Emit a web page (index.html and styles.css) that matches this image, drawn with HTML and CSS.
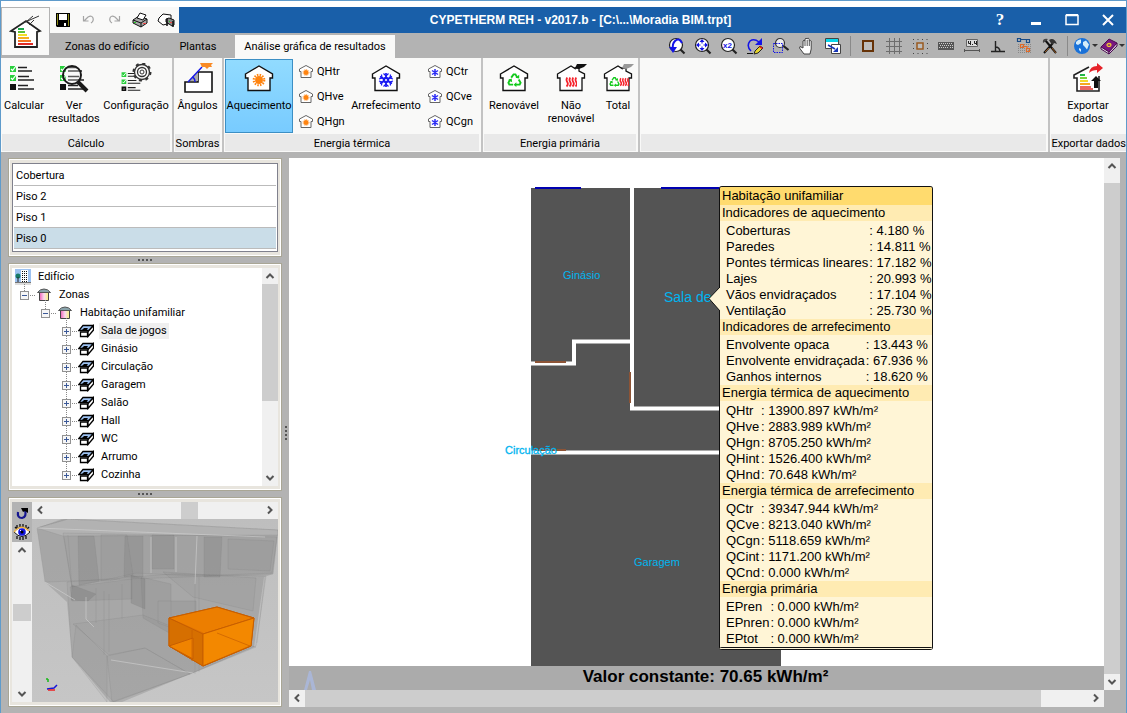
FILE: index.html
```html
<!DOCTYPE html>
<html lang="pt">
<head>
<meta charset="utf-8">
<title>CYPETHERM REH</title>
<link rel="stylesheet" href="styles.css">
</head>
<body>
<svg class="defs" aria-hidden="true">
  <symbol id="house" viewBox="0 0 32 32"><path d="M2.500 11 16 3l4 2.500V5h4v3l5.500 3v4H27v12.500H5V15H2.500z" fill="#fff" stroke="#111" stroke-width="1.300"/></symbol>
  <symbol id="house-plain" viewBox="0 0 32 32"><path d="M2.500 11 16 3l13.500 8v4H27v12.500H5V15H2.500z" fill="#fff" stroke="#111" stroke-width="1.400"/></symbol>
  <symbol id="sun" viewBox="-8 -8 16 16"><circle r="4.500" fill="#ff8410"/><circle r="6" fill="none" stroke="#ff8410" stroke-width="2.500" stroke-dasharray="1.700 1.440"/></symbol>
  <symbol id="snow" viewBox="-8 -8 16 16"><g stroke="#1717f2" stroke-width="1.700" fill="none"><path d="M0-7V7M-6-3.500 6 3.500M-6 3.500 6-3.500"/><path d="M-2.500-6.500 0-4l2.500-2.500M-2.500 6.500 0 4l2.500 2.500M-7-1l3-1-.5-3.500M7 1 4 2l.5 3.500M-7 1l3 1-.5 3.500M7-1 4-2l.5-3.500" stroke-width="1.200"/><circle r="2.500"/></g><circle r="1" fill="#fff"/></symbol>
  <symbol id="house-sun" viewBox="0 0 16 16"><path d="M1.500 5 8 1.500 14.500 5v2.500H13v6H3v-6H1.500z" fill="#fff" stroke="#666"/><circle cx="8" cy="8.500" r="2.500" fill="#ff8410"/><circle cx="8" cy="8.500" r="3" fill="none" stroke="#ff9c40" stroke-dasharray="1 1"/></symbol>
  <symbol id="house-snow" viewBox="0 0 16 16"><path d="M1.500 5 8 1.500 14.500 5v2.500H13v6H3v-6H1.500z" fill="#fff" stroke="#666"/><path d="M8 5v7M5 6.500l6 4M5 10.500l6-4" stroke="#2b2bf5" stroke-width="1.500"/></symbol>
  <symbol id="checks" viewBox="0 0 32 32"><path d="M2 3h6v6H2zM2 12h6v6H2z" fill="#28cf3c"/><path d="m3 6 1.500 1.500L8 3M3 15l1.500 1.500L8 12" stroke="#fff" stroke-width="1.200" fill="none"/><path d="M3 22h4v4H3z" fill="#fff" stroke="#111" stroke-width="2"/><path d="m4 23 2 2m0-2-2 2" stroke="#111"/><path d="M10 4.500h9M10 8h14M10 13.500h11M10 17h16M10 22.500h10M10 26h16" stroke="#222" stroke-width="1.400"/></symbol>
  <symbol id="recycle" viewBox="0 0 16 16"><g fill="none" stroke="#12c91c" stroke-width="2"><path d="M4.500 6 7 2.500h2L11 6M12.500 8l2 3.500-1 2H9M6.500 13.500H2.500l-1-2L3.500 8"/></g><path d="m9 6 4 1V3zM10 11v5l-3-2.500zM1 8.500 5 7l.5 4z" fill="#12c91c"/></symbol>
  <symbol id="flames" viewBox="0 0 16 16"><path d="M3 2q-2 3 0 6t-1 6M7 2q-2 3 0 6t-1 6M11 2q-2 3 0 6t-1 6M15 2q-2 3 0 6t-1 6" fill="none" stroke="#f6232c" stroke-width="2.400"/></symbol>
  <symbol id="room" viewBox="0 0 16 14"><path d="M5 1.500h10.500L11 6.500H.8z" fill="#9fc4f5" stroke="#000" stroke-width="1.300"/><path d="M6 4h4L8 7H3z" fill="#000"/><path d="M2.500 8h7v4.500h-7z" fill="#fff" stroke="#000" stroke-width="1.300"/><path d="M11 6.500 15.500 1.500V6L10 12.500V8z" fill="#fff" stroke="#000" stroke-width="1.300"/></symbol>
  <symbol id="zone" viewBox="0 0 16 14"><linearGradient id="zone-fill"><stop stop-color="#ef62b5"/><stop offset=".5" stop-color="#fbd9f0"/><stop offset="1" stop-color="#f6f37a"/></linearGradient><path d="M3.500 4h9v8.500h-9z" fill="url(#zone-fill)" stroke="#444"/><path d="M1.500 4.500Q4 1 8 1t6.500 3.500z" fill="#8aa4ac" stroke="#555"/></symbol>
  <symbol id="lens" viewBox="0 0 18 18"><circle cx="8" cy="8" r="6.500" fill="#fff" stroke="#222" stroke-width="1.200"/><path d="m12.500 12.500 4 4" stroke="#222" stroke-width="2.200"/></symbol>
  <symbol id="up" viewBox="0 0 10 10"><path d="M1.500 7 5 3.500 8.500 7" fill="none" stroke="#555" stroke-width="2"/></symbol>
  <symbol id="down" viewBox="0 0 10 10"><path d="M1.500 3 5 6.500 8.500 3" fill="none" stroke="#555" stroke-width="2"/></symbol>
  <symbol id="left" viewBox="0 0 10 10"><path d="M7 1.500 3.500 5 7 8.500" fill="none" stroke="#555" stroke-width="2"/></symbol>
  <symbol id="right" viewBox="0 0 10 10"><path d="M3 1.500 6.500 5 3 8.500" fill="none" stroke="#555" stroke-width="2"/></symbol>
</svg>
<div class="window">
  <header class="top">
    <button class="app-button" aria-label="Menu"><svg width="36" height="36" viewBox="0 0 36 36"><path d="M3 17 18 7l14 10-3 1v15H7V18z" fill="#fff" stroke="#222" stroke-width="1.800"/><path d="m15 9 16-7M18 8l7-6M26 6l-5 5" stroke="#333" fill="none"/><path d="M10 14h6v2h-6z" fill="#19a54b"/><path d="M10 17h7v2h-7z" fill="#5bc236"/><path d="M10 20h9v2h-9z" fill="#f2df27"/><path d="M10 23h11v2H10z" fill="#f6b21f"/><path d="M10 26h13v2H10z" fill="#f27321"/><path d="M10 29h15v2H10z" fill="#e02b26"/></svg></button>
    <div class="top-main">
      <div class="title-row">
        <div class="quick">
          <button aria-label="Guardar"><svg width="16" height="16"><path d="M1 1h14v14H2l-1-1z" fill="#000"/><path d="M4 2h8v6H4z" fill="#fff"/><path d="M2 2h1v11H2zM13 2h1v12h-1z" fill="#8a8a18"/><path d="M9 11h2v3H9z" fill="#fff"/></svg></button>
          <button aria-label="Desfazer"><svg width="16" height="16"><path d="M2.500 4v5h5M3 9l4-4q4-2 5 1t-2 5" fill="none" stroke="#a5a5a5" stroke-width="1.200"/></svg></button>
          <button aria-label="Refazer"><svg width="16" height="16"><path d="M13.500 4v5h-5M13 9 9 5Q5 3 4 6t2 5" fill="none" stroke="#a5a5a5" stroke-width="1.200"/></svg></button>
          <button aria-label="Imprimir"><svg width="18" height="16"><path d="m2 8 6-4 8 3v4l-6 4-8-4z" fill="#a9a9a9" stroke="#111"/><path d="m6 6 3-5 6 2-3 5z" fill="#fff" stroke="#111"/><path d="m2 8 8 3 6-4M10 11v4" stroke="#111" fill="none"/><path d="M3 10h2v1H3z" fill="#2c2"/><path d="M12 11h3v1h-3z" fill="#e44"/></svg></button>
          <button aria-label="Exportar imagem"><svg width="18" height="16"><path d="M2 6 6 2l8 1v8L6 13 1 9z" fill="#fff" stroke="#111"/><path d="m9 7 3-1 5 2v5l-2 1-6-4z" fill="#888" stroke="#111"/><path d="M10 7v7M16 9v6" stroke="#111" stroke-width="1.500"/><path d="M12 9h1v1h-1z" fill="#2c2"/><path d="M13 10h2v1h-2z" fill="#e44"/></svg></button>
        </div>
        <div class="title-bar">
          <h1>CYPETHERM REH - v2017.b - [C:\...\Moradia BIM.trpt]</h1>
          <button class="win-btn help" aria-label="Ajuda">?</button>
          <button class="win-btn" aria-label="Minimizar"><svg width="14" height="14"><path d="M2 10.500h10" stroke="#fff" stroke-width="3"/></svg></button>
          <button class="win-btn" aria-label="Maximizar"><svg width="14" height="14"><path d="M1 2.500h12v9H1z" fill="none" stroke="#fff" stroke-width="1.500"/><path d="M1 2h12" stroke="#fff" stroke-width="2"/></svg></button>
          <button class="win-btn" aria-label="Fechar"><svg width="14" height="14"><path d="m2 2 10 10M12 2 2 12" stroke="#fff" stroke-width="2"/></svg></button>
        </div>
      </div>
      <div class="tab-row">
        <nav class="tabs">
          <button class="tab">Zonas do edifício</button>
          <button class="tab">Plantas</button>
          <button class="tab active">Análise gráfica de resultados</button>
        </nav>
        <div class="tools">
          <button aria-label="Vista anterior"><svg width="18" height="18"><use href="#lens"/><path d="M14 6Q11 0 7 4 4 7 5 12" fill="none" stroke="#1414e6" stroke-width="2"/><path d="M1 10h8l-4 6z" fill="#1414e6"/></svg></button>
          <button aria-label="Enquadrar"><svg width="18" height="18"><use href="#lens"/><path d="M8 4v8M4 8h8" stroke="#1414e6" stroke-dasharray="2.500 3"/><path d="m8 2 2.500 3h-5zM8 14l2.500-3h-5zM2 8l3-2.500v5zM14 8l-3-2.500v5z" fill="#1414e6"/></svg></button>
          <button aria-label="Zoom duplo"><svg width="18" height="18"><use href="#lens"/><text x="3" y="11" class="lens-text">x2</text></svg></button>
          <button aria-label="Redesenhar"><svg width="18" height="18"><path d="M5 14Q0 9 4 4q4-3 9 1" fill="none" stroke="#1414e6" stroke-width="1.500"/><path d="M16 1v7H9z" fill="#1414e6"/><path d="m9 14 5-5 3 2-5 5-4 1z" fill="#e7d52c" stroke="#222"/><path d="m14 9 3 2-1 1-3-2z" fill="#e11"/><path d="M1 16.500h6" stroke="#111"/></svg></button>
          <button aria-label="Zoom janela"><svg width="18" height="18"><circle cx="8" cy="6" r="4.500" fill="#eee" stroke="#333" stroke-width="1.200"/><path d="m11.500 9 5 4" stroke="#222" stroke-width="2.200"/><path d="M1.500 6.500h9v9h-9z" fill="none" stroke="#1414e6" stroke-dasharray="1.500 1"/></svg></button>
          <button aria-label="Mover"><svg width="18" height="18"><path d="M6 17 1.500 11 2 9.500 5 11V4q1-1.500 2 0V2q1-1.500 2.200 0V1.500q1.300-1 2 .8V4q1.300-1 2 0v8L12 17z" fill="#fff" stroke="#444"/><path d="M7 4v5M9.200 3v6M11.300 4v5" stroke="#555"/></svg></button>
          <button aria-label="Copiar vista"><svg width="18" height="18"><path d="M1.500 1.500h13v10h-13z" fill="#fff" stroke="#444"/><path d="M2 2h12v3H2z" fill="#08d6ea"/><path d="M7.500 7.500h9v9h-9z" fill="#fff" stroke="#444"/><path d="m4 8 7 4" stroke="#1535b8" stroke-width="1.500"/><path d="M14 10v5H9z" fill="#1535b8"/></svg></button>
          <span class="tool-sep"></span>
          <button aria-label="Contorno"><svg width="18" height="18"><path d="M4 4h10v10H4z" fill="#bdbdbd" stroke="#663207" stroke-width="2"/></svg></button>
          <button aria-label="Grelha"><svg width="18" height="18"><path d="M4.500 1v16M9.500 1v16M14.500 1v16M1 4.500h16M1 9.500h16M1 14.500h16" stroke="#6d6d6d"/></svg></button>
          <button aria-label="Malha"><svg width="18" height="18"><path d="M2 2.500h15M2 16.500h15M2 6.500h1M2 11.500h1M16 6.500h1M16 11.500h1" stroke="#444" stroke-dasharray="1 3.500"/><path d="M6 6h6v6H6z" fill="#bdbdbd" stroke="#9b5b20" stroke-width="1.500"/></svg></button>
          <button aria-label="Teclado"><svg width="18" height="18"><path d="M1 5h16v8H1z" fill="#555"/><path d="M2 6.500h14M3 8.500h13M2 10.500h3m1 0h6m1 0h3" stroke="#ccc" stroke-dasharray="1 1"/></svg></button>
          <button aria-label="Cotas"><svg width="18" height="18"><path d="M3.500 2.500h11v7h-11z" fill="#ddd" stroke="#666"/><path d="M5.500 4v2.500h2M7.500 4v4M9 7.500h1M11.500 4v2.500h2M13.500 4v4" stroke="#222" fill="none"/><path d="M1 13.500h16M1.500 12v3M16.500 12v3" stroke="#555"/></svg></button>
          <button aria-label="Ortogonal"><svg width="18" height="18"><path d="M2 14.500h14M6.500 4v11M6 10q5 0 5 5" stroke="#222" stroke-width="1.400" fill="none"/></svg></button>
          <button aria-label="Camadas"><svg width="18" height="18"><path d="M3 7.500h13M3 9.500h13M3 11.500h13M3 13.500h13M3 15.500h13" stroke="#888" stroke-dasharray="1 1"/><path d="M2.500 1.500h3v3h-3zM11.500 2.500h3v3h-3zM6 2.500h5" stroke="#174b87" stroke-width="1.200" fill="none"/><path d="M5.500 7.500h3v3h-3zM11.500 11.500h3v3h-3zM9 9.500h3v2" stroke="#e06a28" stroke-width="1.200" fill="none"/></svg></button>
          <button aria-label="Ferramentas"><svg width="18" height="18"><path d="m3 16 9-10M4 3l11 13" stroke="#111" stroke-width="2"/><path d="M8 3q5-3 8 4l-3-1-2 2z" fill="#333"/><path d="M2 6q-1-5 5-4L5 4z" fill="#444"/><path d="m11 11 4 5M4 15l4-4" stroke="#96571f"/></svg></button>
          <span class="tool-sep"></span>
          <button class="drop" aria-label="Internet"><svg width="18" height="18"><circle cx="9" cy="9" r="8" fill="#1971d8"/><path d="M3 5q2-3 5-2.500L8 6 5 8 3 7zM10 5l3-1.500 3 4-2 5-2-2.500-2-2zM6 11l2 1v3l-2-2z" fill="#d4ecfa"/></svg><i></i></button>
          <button class="drop" aria-label="Manual"><svg width="18" height="18"><path d="m1 10 8-8 8 4-8 9z" fill="#7a1680" stroke="#4a0a50"/><path d="m1 10 8 5v2l-8-5z" fill="#eee" stroke="#4a0a50"/><path d="m9 15 8-9v3l-8 8z" fill="#d5bdd8" stroke="#4a0a50"/><ellipse cx="9" cy="8" rx="2" ry="1.500" fill="none" stroke="#efc832" stroke-width="1.300"/></svg><i></i></button>
        </div>
      </div>
    </div>
  </header>

  <div class="ribbon">
    <section class="group">
      <div class="group-body calc">
        <button class="big"><svg width="32" height="32"><use href="#checks"/></svg>Calcular</button>
        <button class="big"><svg width="32" height="32"><use href="#checks"/><circle cx="14" cy="12" r="9" fill="#fff" fill-opacity=".25" stroke="#1a1a1a" stroke-width="2"/><path d="m20 19 9 9" stroke="#1a1a1a" stroke-width="4"/></svg>Ver<br>resultados</button>
        <button class="big"><svg width="36" height="32"><use href="#checks" x="2" y="7" width="25" height="25"/><circle cx="24" cy="9" r="7.500" fill="#f9f9f8" stroke="#333" stroke-width="1.300"/><circle cx="24" cy="9" r="8.500" fill="none" stroke="#333" stroke-width="2" stroke-dasharray="3 3.670"/><circle cx="24" cy="9" r="4.500" fill="#fff" stroke="#333" stroke-width="1.300"/><circle cx="24" cy="9" r="2" fill="none" stroke="#333"/></svg>Configuração</button>
      </div>
      <h2>Cálculo</h2>
    </section>
    <section class="group">
      <div class="group-body">
        <button class="big"><svg width="32" height="32"><path d="M3 29V19h13V9h14v20z" fill="#fff" stroke="#111" stroke-width="1.600"/><path d="m7 18 9-9v9z" fill="#aaa"/><path d="M6 19 20 4M10 14q3 1 3 5" stroke="#1717e8" stroke-width="1.400" fill="none"/><path d="M18 0h13l-2 2 1 2-3 0-2 2-2-2-3 0z" fill="#f98a25"/></svg>Ângulos</button>
      </div>
      <h2>Sombras</h2>
    </section>
    <section class="group">
      <div class="group-body heat">
        <button class="big pressed"><svg width="32" height="32"><use href="#house-plain"/><use href="#sun" x="9" y="10" width="14" height="14"/></svg>Aquecimento</button>
        <div class="stack">
          <button class="small"><svg width="16" height="16"><use href="#house-sun"/></svg>QHtr</button>
          <button class="small"><svg width="16" height="16"><use href="#house-sun"/></svg>QHve</button>
          <button class="small"><svg width="16" height="16"><use href="#house-sun"/></svg>QHgn</button>
        </div>
        <button class="big"><svg width="32" height="32"><use href="#house-plain"/><use href="#snow" x="8" y="9" width="16" height="16"/></svg>Arrefecimento</button>
        <div class="stack">
          <button class="small"><svg width="16" height="16"><use href="#house-snow"/></svg>QCtr</button>
          <button class="small"><svg width="16" height="16"><use href="#house-snow"/></svg>QCve</button>
          <button class="small"><svg width="16" height="16"><use href="#house-snow"/></svg>QCgn</button>
        </div>
      </div>
      <h2>Energia térmica</h2>
    </section>
    <section class="group">
      <div class="group-body primary">
        <button class="big"><svg width="32" height="32"><use href="#house-plain"/><use href="#recycle" x="9" y="9" width="15" height="15"/></svg>Renovável</button>
        <button class="big"><svg width="32" height="32"><use href="#house"/><path d="m20 5 2-4h10l-3 3-5 2z" fill="#111"/><use href="#flames" x="10" y="13" width="12" height="12"/></svg>Não<br>renovável</button>
        <button class="big"><svg width="32" height="32"><use href="#house"/><path d="m20 5 2-4h10l-3 3-5 2z" fill="#999"/><use href="#recycle" x="7" y="12" width="11" height="13"/><use href="#flames" x="17" y="13" width="10" height="12"/></svg>Total</button>
      </div>
      <h2>Energia primária</h2>
    </section>
    <section class="group filler"><div class="group-body"></div><h2></h2></section>
    <section class="group">
      <div class="group-body export">
        <button class="big"><svg width="32" height="32"><path d="M17 4 2 12v3h3v13h22V13" fill="#fff" stroke="#222" stroke-width="1.600"/><path d="M8 12h5" stroke="#23b64b" stroke-width="2"/><path d="M8 15h7" stroke="#7ad43a" stroke-width="2"/><path d="M8 18h8" stroke="#f4d82b" stroke-width="2"/><path d="M8 21h10" stroke="#f6a91f" stroke-width="2"/><path d="M8 24h11M8 26h13" stroke="#e3342c" stroke-width="1.500"/><path d="M17 10q1-7 8-7V0l6 5-6 5V7q-5 0-8 3z" fill="#e6232a"/><path d="M22 25v-7h-3l5-5 5 5h-3v7z" fill="#111"/></svg>Exportar<br>dados</button>
      </div>
      <h2>Exportar dados</h2>
    </section>
  </div>

  <main class="workspace">
    <aside class="sidebar">
      <div class="panel">
        <ul class="floors">
          <li>Cobertura</li><li>Piso 2</li><li>Piso 1</li><li class="selected">Piso 0</li>
        </ul>
      </div>
      <div class="grip"></div>
      <div class="panel tree-panel">
        <ul class="tree">
          <li><div class="node root"><svg width="16" height="16"><path d="M0 0h16v13H0z" fill="#9dc2f0"/><path d="M6 1h7v12H6z" fill="#fff"/><path d="M7.500 2v11M9.500 2v11M11.500 2v11" stroke="#111" stroke-dasharray="1 1"/><circle cx="3" cy="7" r="2.500" fill="#177a66"/><path d="M3 8v5" stroke="#222"/><path d="M0 13h16v1H0z" fill="#777"/><path d="M0 14h16v2H0z" fill="#ddd"/></svg><span>Edifício</span></div>
            <ul>
              <li><div class="node"><button class="toggle minus" aria-label="Recolher"></button><svg width="16" height="14"><use href="#zone"/></svg><span>Zonas</span></div>
                <ul>
                  <li><div class="node"><button class="toggle minus" aria-label="Recolher"></button><svg width="16" height="14"><use href="#zone"/></svg><span>Habitação unifamiliar</span></div>
                    <ul>
                      <li><div class="node"><button class="toggle plus" aria-label="Expandir"></button><svg width="16" height="14"><use href="#room"/></svg><span class="current">Sala de jogos</span></div></li>
                      <li><div class="node"><button class="toggle plus" aria-label="Expandir"></button><svg width="16" height="14"><use href="#room"/></svg><span>Ginásio</span></div></li>
                      <li><div class="node"><button class="toggle plus" aria-label="Expandir"></button><svg width="16" height="14"><use href="#room"/></svg><span>Circulação</span></div></li>
                      <li><div class="node"><button class="toggle plus" aria-label="Expandir"></button><svg width="16" height="14"><use href="#room"/></svg><span>Garagem</span></div></li>
                      <li><div class="node"><button class="toggle plus" aria-label="Expandir"></button><svg width="16" height="14"><use href="#room"/></svg><span>Salão</span></div></li>
                      <li><div class="node"><button class="toggle plus" aria-label="Expandir"></button><svg width="16" height="14"><use href="#room"/></svg><span>Hall</span></div></li>
                      <li><div class="node"><button class="toggle plus" aria-label="Expandir"></button><svg width="16" height="14"><use href="#room"/></svg><span>WC</span></div></li>
                      <li><div class="node"><button class="toggle plus" aria-label="Expandir"></button><svg width="16" height="14"><use href="#room"/></svg><span>Arrumo</span></div></li>
                      <li><div class="node"><button class="toggle plus" aria-label="Expandir"></button><svg width="16" height="14"><use href="#room"/></svg><span>Cozinha</span></div></li>
                    </ul>
                  </li>
                </ul>
              </li>
            </ul>
          </li>
        </ul>
        <div class="scroll vertical tree-scroll"><button aria-label="Subir"><svg width="10" height="10"><use href="#up"/></svg></button><div class="track"><div class="thumb"></div></div><button aria-label="Descer"><svg width="10" height="10"><use href="#down"/></svg></button></div>
      </div>
      <div class="grip"></div>
      <div class="panel view-panel">
        <div class="view-side">
          <button class="view-btn" aria-label="Rodar"><svg width="16" height="18"><path d="M4 9q-1 6 4 6 5-1 3-8" fill="none" stroke="#16168f" stroke-width="2.200"/><path d="M7 5h7v5l-3-2-2 1z" fill="#000"/></svg></button>
          <button class="view-btn" aria-label="Vista"><svg width="18" height="18"><path d="M4 2v3M7 1v3M10 1v3M13 2v3M2 4l2 2M16 4l-2 2M4 16v-3M7 17v-3M10 17v-3M13 16v-3" stroke="#111" stroke-width="1.300"/><path d="M1 9q8-10 16 0-8 9-16 0z" fill="#fff" stroke="#111"/><path d="M1 9q7-9 15-1" fill="none" stroke="#efb54c" stroke-width="1.500"/><circle cx="9" cy="9" r="3.800" fill="#1515e0"/><circle cx="9" cy="9" r="1.500" fill="#000"/><path d="M7 7h1v1H7z" fill="#fff"/></svg></button>
          <div class="scroll vertical"><button aria-label="Subir"><svg width="10" height="10"><use href="#up"/></svg></button><div class="track"><div class="thumb"></div></div><button aria-label="Descer"><svg width="10" height="10"><use href="#down"/></svg></button></div>
        </div>
        <div class="view-main">
          <div class="scroll horizontal"><button aria-label="Esquerda"><svg width="10" height="10"><use href="#left"/></svg></button><div class="track"><div class="thumb"></div></div><button aria-label="Direita"><svg width="10" height="10"><use href="#right"/></svg></button></div>
          <svg class="model" viewBox="0 0 246 183" preserveAspectRatio="none">
            <linearGradient id="back" x2="0" y2="1"><stop stop-color="#bebebe"/><stop offset="1" stop-color="#c6c6c6"/></linearGradient>
            <path d="M0 0h246v183H0z" fill="url(#back)"/>
            <path d="M5 9 30 0l216 11-5 44-9 3-10 70-64 27-68 28H78L40 138l-5-55-22-20z" fill="#8c8c8c" fill-opacity=".4"/>
            <g fill="#707070" fill-opacity=".07" stroke="#777" stroke-opacity=".16">
              <path d="M5 9 36 0l210 11-5 44-228 8z"/>
              <path d="M5 9 36 0l210 11v5L31 17z" fill="#ccc" fill-opacity=".3"/>
              <path d="m31 14 214 4-5 36-76 3-60-3-35 8-29 6z"/>
              <path d="m35 63 105-8 94 2-10 70-66 28-76 28-42-45z"/>
              <path d="m41 105 70-9 50 20 63 12-66 27-45-26-36 7z"/>
              <path d="m44 106 31 31v46L40 138z"/>
              <path d="m75 137 38-8 45 26-78 28z"/>
              <path d="M69 16h26l6 40-24 6h-8z"/>
              <path d="M46 17h16l5 45-20 4zM93 17h18v41H92z" fill-opacity=".22"/>
              <path d="M172 18h18l-2 40h-16zM120 16h22v34h-22z" fill-opacity=".2"/>
              <path d="m196 20 46 2-4 30-42-2zM131 53l93 6-3 33-60-14z"/>
              <path d="m38 68 62-8v20l-60 2zM109 58l30 7v50l-28-16zM126 82h38v36l-38-14z" fill-opacity=".14"/>
              <path d="m99 56 14 4v30l-14-6zM40 66l24 9-8 7-17-1z" fill-opacity=".28"/>
              <path d="M64 69v35M72 72v64M77 75v58M90 65v35M163 58v97M167 58v95M233 58l-8 66M36 16l4 54M32 18l8 50" fill="none"/>
            </g>
            <g stroke="#d5d5d5" stroke-opacity=".55" fill="none"><path d="M144 18v35M165 17l-2 48M119 18v36M54 78v22l8 8M79 141l82 13M5 9l228 9M13 63l30 18"/></g>
            <g stroke="#c75e00" stroke-linejoin="round"><path d="m137 99 48-11 37 11-3 28-48 20-34-20z" fill="#f28500"/><path d="m137 99 34 15v33l-34-20z" fill="#d66f00"/><path d="m137 127 24-8v21z" fill="#f08300"/><path d="m137 99 48-11 37 11-51 16z" fill="#ea7b00" fill-opacity=".7"/><path d="m171 115 51-16-3 28-48 20z" fill="#f38800"/><path d="M160 111v31M185 114l33 13-47 20" fill="none" stroke-opacity=".7"/></g>
            <path d="M16 160v3M14 160h2" stroke="#18b818" stroke-width="1.500"/><path d="m15 170 7-1 3-3" stroke="#1515d8" stroke-width="1.500" fill="none"/><path d="M16 171h7" stroke="#e22" stroke-width="1.500"/>
          </svg>
        </div>
      </div>
    </aside>
    <div class="split"></div>
    <section class="stage">
      <div class="stage-main">
        <div class="plan">
          <svg class="plan-drawing" width="280" height="478" viewBox="-30 0 280 478">
            <path d="M0 0h250v478H0z" fill="#545454"/>
            <path d="M101 0v220.500h149M0 175.500h43v-22h58M0 264.500h250" fill="none" stroke="#fff" stroke-width="4"/>
            <path d="M4 0h46M130 0h92" stroke="#0000b0" stroke-width="2"/>
            <path d="M4 174h31M99 184v31M4 262h31" stroke="#8d5436" stroke-width="2"/>
            <text x="32" y="91" class="room-name">Ginásio</text>
            <text x="133" y="114" class="room-name large">Sala de</text>
            <text x="-26" y="266" class="room-name strong">Circulação</text>
            <text x="103" y="378" class="room-name">Garagem</text>
          </svg>
          <div class="callout">
            <svg class="callout-tip" width="12" height="24"><path d="M12 0 1 11.500 12 24z" fill="#fff5d6"/><path d="M12 0 1 11.500 12 24" fill="none" stroke="#111"/></svg>
            <h3>Habitação unifamiliar</h3>
            <h4>Indicadores de aquecimento</h4>
            <table><tr><th>Coberturas</th><td>: 4.180 %</td></tr><tr><th>Paredes</th><td>: 14.811 %</td></tr><tr><th>Pontes térmicas lineares</th><td>: 17.182 %</td></tr><tr><th>Lajes</th><td>: 20.993 %</td></tr><tr><th>Vãos envidraçados</th><td>: 17.104 %</td></tr><tr><th>Ventilação</th><td>: 25.730 %</td></tr></table>
            <h4>Indicadores de arrefecimento</h4>
            <table><tr><th>Envolvente opaca</th><td>: 13.443 %</td></tr><tr><th>Envolvente envidraçada</th><td>: 67.936 %</td></tr><tr><th>Ganhos internos</th><td>: 18.620 %</td></tr></table>
            <h4>Energia térmica de aquecimento</h4>
            <table><tr><th>QHtr</th><td>: 13900.897 kWh/m²</td></tr><tr><th>QHve</th><td>: 2883.989 kWh/m²</td></tr><tr><th>QHgn</th><td>: 8705.250 kWh/m²</td></tr><tr><th>QHint</th><td>: 1526.400 kWh/m²</td></tr><tr><th>QHnd</th><td>: 70.648 kWh/m²</td></tr></table>
            <h4>Energia térmica de arrefecimento</h4>
            <table><tr><th>QCtr</th><td>: 39347.944 kWh/m²</td></tr><tr><th>QCve</th><td>: 8213.040 kWh/m²</td></tr><tr><th>QCgn</th><td>: 5118.659 kWh/m²</td></tr><tr><th>QCint</th><td>: 1171.200 kWh/m²</td></tr><tr><th>QCnd</th><td>: 0.000 kWh/m²</td></tr></table>
            <h4>Energia primária</h4>
            <table><tr><th>EPren</th><td>: 0.000 kWh/m²</td></tr><tr><th>EPnren</th><td>: 0.000 kWh/m²</td></tr><tr><th>EPtot</th><td>: 0.000 kWh/m²</td></tr></table>
          </div>
        </div>
        <div class="legend"><svg class="north" width="14" height="20"><path d="M6 1 1 20h3l3-10 2 10h4L8 1z" fill="#aab6d6"/></svg><span>Valor constante: 70.65 kWh/m²</span></div>
        <div class="scroll horizontal stage-h"><button aria-label="Esquerda"><svg width="10" height="10"><use href="#left"/></svg></button><div class="track"><div class="thumb"></div></div><button aria-label="Direita"><svg width="10" height="10"><use href="#right"/></svg></button></div>
      </div>
      <div class="stage-right">
        <div class="scroll vertical stage-v"><button aria-label="Subir"><svg width="10" height="10"><use href="#up"/></svg></button><div class="track"><div class="thumb"></div></div><button aria-label="Descer"><svg width="10" height="10"><use href="#down"/></svg></button></div>
      </div>
    </section>
  </main>
</div>
</body>
</html>
```
FILE: styles.css
```css
* { box-sizing: border-box; }
body { margin: 0; font: 11px/13px Roboto, "Liberation Sans", sans-serif; color: #000; }
button { font: inherit; color: inherit; border: 0; background: none; padding: 0; margin: 0; }
h1, h2, h3, h4, ul { margin: 0; padding: 0; font-size: inherit; font-weight: normal; }
ul { list-style: none; }
svg { display: block; flex: none; }
.defs { position: absolute; width: 0; height: 0; }

.window { min-height: 100vh; display: flex; flex-direction: column; background: #b3b3b3; border: 1px solid #5f9bcb; border-bottom: 0; }

.top { display: flex; border-top: 6px solid #fff; }
.app-button { width: 47px; height: 47px; margin: 1px 1px 3px 1px; background: #f9f9f8; display: grid; place-items: center; }
.top-main { flex: 1; display: flex; flex-direction: column; }
.title-row { display: flex; height: 26px; }
.quick { display: flex; width: 129px; background: #f9f9f8; }
.quick button { flex: 1; display: grid; place-items: center; }
.title-bar { flex: 1; display: flex; align-items: center; background: #195fa9; color: #fff; }
.title-bar h1 { flex: 1; text-align: center; font: bold 12px/16px "Liberation Sans", sans-serif; }
.win-btn { width: 36px; height: 26px; display: grid; place-items: center; }
.help { font: bold 17px/26px "Liberation Serif", serif; }
.tab-row { flex: 1; display: flex; justify-content: space-between; }
.tabs { display: flex; padding-top: 2px; }
.tab { padding: 0 15px; }
.tab.active { background: #f9f9f8; margin-left: 4px; padding: 0 9px; }
.tools { display: flex; align-items: center; }
.tools button { width: 26px; height: 22px; display: flex; align-items: center; justify-content: center; }
.tools .drop { width: 27px; }
.drop i { border: 3px solid transparent; border-top-color: #333; border-bottom: 0; margin-left: 1px; }
.tool-sep { width: 1px; height: 20px; background: #8a8a8a; margin: 0 4px; }
.lens-text { font: bold 8px "Liberation Sans", sans-serif; fill: #1414e6; }

.ribbon { display: flex; background: #f9f9f8; padding-left: 1px; }
.group { display: flex; flex-direction: column; border-right: 2px solid #c3c3c3; padding-right: 2px; margin-right: 1px; }
.group:last-child { border: 0; padding: 0; margin: 0; }
.group-body { display: flex; height: 76px; padding-top: 1px; }
.group h2 { text-align: center; background: #e9e9e9; height: 17px; line-height: 20px; margin-bottom: 1px; }
.filler { flex: 1; }
.big { display: flex; flex-direction: column; align-items: center; height: 74px; padding-top: 3px; border: 1px solid transparent; text-align: center; white-space: nowrap; }
.big svg { margin-bottom: 4px; }
.pressed { background: linear-gradient(#91dbff, #78cbff); border-color: #3c8fc4; }
.calc { display: grid; grid-template-columns: 44px 56px 68px; }
.group-body > .big:only-child { width: 45px; }
.export > .big:only-child { width: 73px; }
.heat { display: grid; grid-template-columns: 68px 57px 72px 57px; }
.stack { display: flex; flex-direction: column; padding-left: 5px; }
.small { display: flex; align-items: center; gap: 3px; height: 25px; }
.primary { display: grid; grid-template-columns: 56px 58px 36px; padding-left: 2px; }

.workspace { flex: 1; display: flex; padding: 6px 6px 6px 7px; }
.sidebar { width: 274px; display: flex; flex-direction: column; }
.panel { background: #e8e5de; border: 1px solid #a9a695; outline: 1px solid #fff; outline-offset: -2px; padding: 4px 3px; display: flex; }
.floors { flex: 1; background: #fff; border: 1px solid #80818d; padding: 1px 1px 2px; }
.floors li { height: 21px; line-height: 20px; padding: 1px 2px 0; border-bottom: 1px solid #bbb; }
.floors .selected { background: #cadde8; }
.grip { height: 6px; display: grid; place-items: center; }
.grip::before { content: ""; width: 14px; height: 2px; background: repeating-linear-gradient(90deg, #555 0 2px, transparent 2px 4px); }
.tree { flex: 1; background: #fff; padding-bottom: 2px; }
.node { display: flex; align-items: center; height: 18px; padding-left: 50px; }
.node span { margin-left: 5px; padding: 0 2px; line-height: 16px; }
.node .current { background: #efefef; }
.root { padding-left: 3px; }
.tree > li > ul > li > .node { padding-left: 8px; }
.tree > li > ul > li > ul > li > .node { padding-left: 29px; }
.toggle { width: 9px; height: 9px; margin-right: 7px; border: 1px solid #919191; background: linear-gradient(#3b5998, #3b5998) center / 5px 1px no-repeat, #f6f6f6; position: relative; }
.plus { background: linear-gradient(#3b5998, #3b5998) center / 5px 1px no-repeat, linear-gradient(#3b5998, #3b5998) center / 1px 5px no-repeat, #f6f6f6; }
.toggle::before { content: ""; position: absolute; left: 9px; top: 3px; width: 5px; border-top: 1px dotted #888; }
.toggle::after { content: ""; position: absolute; left: 3px; top: -10px; height: 9px; border-left: 1px dotted #888; }

.scroll { display: flex; background: #f0f0f0; }
.scroll button { width: 16px; height: 16px; display: grid; place-items: center; }
.scroll .track { flex: 1; display: flex; }
.scroll .thumb { background: #cdcdcd; }
.vertical { flex-direction: column; width: 16px; }
.vertical .track { flex-direction: column; }
.horizontal { height: 16px; }
.tree-scroll .thumb { height: 63%; }

.view-panel { flex: 1; min-height: 180px; }
.view-side { width: 20px; display: flex; flex-direction: column; background: #f0f0f0; }
.view-btn { height: 20px; background: #b3b3b3; display: grid; place-items: center; }
.view-side .scroll { flex: 1; width: 20px; align-items: center; }
.view-side .track { width: 18px; padding-top: 46px; }
.view-side .thumb { height: 17px; }
.view-main { flex: 1; display: flex; flex-direction: column; }
.view-main .horizontal { height: 17px; }
.view-main .track { padding-left: 133px; }
.view-main .thumb { width: 17px; }
.model { width: 100%; flex: 1; min-height: 0; height: 100px; }

.split { width: 7px; display: grid; place-items: center; }
.split::before { content: ""; width: 2px; height: 14px; background: repeating-linear-gradient(#555 0 2px, transparent 2px 4px); }
.stage { flex: 1; display: flex; background: #fff; }
.stage-main { flex: 1; display: flex; flex-direction: column; }
.plan { flex: 1; position: relative; overflow: hidden; min-height: 500px; background: #fff; }
.plan-drawing { position: absolute; left: 212px; top: 30px; overflow: visible; }
.room-name { font: 11px "Liberation Sans", sans-serif; fill: #00b4f0; }
.room-name.large { font-size: 14px; }
.room-name.strong { stroke: #00b4f0; stroke-width: .3; }
.callout { position: absolute; left: 430px; top: 28px; width: 214px; border: 1px solid #111; border-bottom-width: 3px; border-bottom-style: double; border-radius: 3px; background: #fff5d6; font: 13px/16px "Liberation Sans", sans-serif; }
.callout-tip { position: absolute; left: -12px; top: 100px; }
.callout h3 { background: #ffdb6e; line-height: 18px; padding: 0 2px; border-radius: 2px 2px 0 0; }
.callout h4 { background: #ffebb2; padding: 0 2px; }
.callout table { border-spacing: 0; margin: 2px 0 0 6px; }
.callout th, .callout td { font-weight: normal; text-align: left; padding: 0; height: 16px; white-space: nowrap; }
.callout th { padding-right: 1px; }
.legend { height: 24px; background: #ababab; display: grid; place-items: center; position: relative; padding: 0 0 3px 18px; font: bold 17px/20px "Liberation Sans", sans-serif; }
.north { position: absolute; left: 14px; bottom: 0; }
.stage-h { height: 17px; }
.stage-h .thumb { width: 94%; }
.stage-right { width: 16px; padding-bottom: 17px; background: #b3b3b3; display: flex; }
.stage-v .track { padding-top: 9px; }
.stage-v .thumb { flex: 1; }
```
